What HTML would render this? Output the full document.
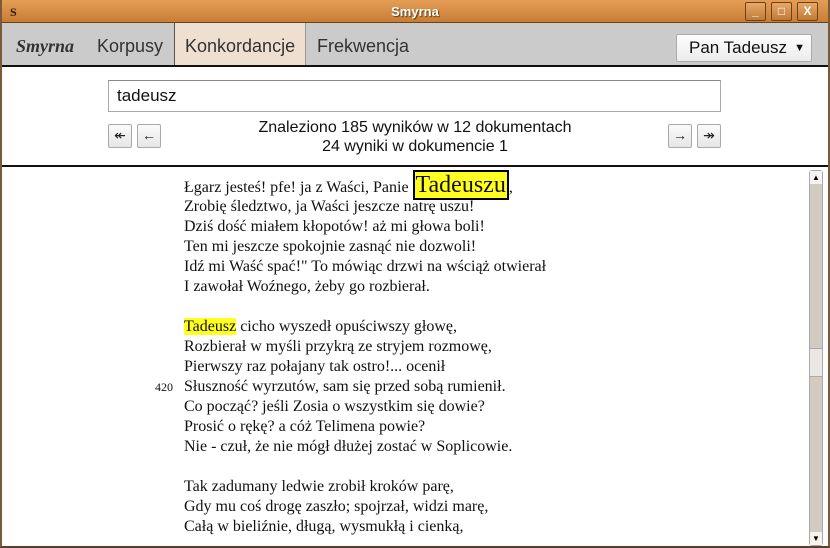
<!DOCTYPE html>
<html><head><meta charset="utf-8"><style>
*{margin:0;padding:0;box-sizing:border-box}
body{width:830px;height:548px;overflow:hidden;background:#fff;font-family:"Liberation Sans",sans-serif;position:relative}
.title{position:absolute;left:0;top:0;width:830px;height:23px;background:linear-gradient(#e59d55,#c87d35);border-bottom:1px solid #6a4418}
.title .t{position:absolute;left:0;width:830px;text-align:center;top:4px;color:#fff;font-weight:bold;font-size:13px;text-shadow:1px 1px 1px #5a3a10}
.title .s{position:absolute;left:10px;top:5px;font-family:"Liberation Serif",serif;font-weight:bold;font-size:12px;color:#2a1a08}
.wb{position:absolute;top:2px;width:21px;height:19px;border:1px solid #6a4418;border-radius:2px;background:linear-gradient(#e8a868,#c07a35);color:#fff;font-size:12px;font-weight:bold;text-align:center;line-height:17px}
.bar{position:absolute;left:2px;top:23px;width:826px;height:44px;background:#cbcbcb;border-bottom:2px solid #111}
.bar span{position:absolute;top:0;height:42px;line-height:46px;font-size:18px;color:#333}
.sel{position:absolute;left:676px;top:34px;width:136px;height:28px;background:linear-gradient(#fdfdfd,#ececec);border:1px solid #aaa;border-radius:2px;font-size:17px;line-height:26px;padding-left:12px;color:#111}
.inp{position:absolute;left:108px;top:80px;width:613px;height:32px;border:1px solid #aaa;border-top-color:#888;font-size:17px;line-height:30px;padding-left:8px;color:#111}
.btn{position:absolute;top:124px;width:24px;height:24px;border:1px solid #aaa;border-radius:2px;background:linear-gradient(#fafafa,#e6e6e6);font-size:14px;text-align:center;line-height:21px;color:#222}
.info{position:absolute;left:200px;top:118px;width:430px;text-align:center;font-size:16px;line-height:19px;color:#111}
.sep{position:absolute;left:0;top:165px;width:830px;height:2px;background:#111}
.txt{position:absolute;left:184px;top:0;font-family:"Liberation Serif",serif;font-size:16px;color:#111;white-space:nowrap}
.l{position:absolute;left:0}
.hl{background:#ffff22}
.big{background:#ffff22;border:2px solid #000;font-size:24px;padding:0 1px;line-height:26px}
.num{position:absolute;left:155px;font-family:"Liberation Serif",serif;font-size:12px;color:#111}
.sb{position:absolute;left:809px;top:170px;width:14px;height:376px;background:#d3cbc2;border:1px solid #aaa;border-radius:3px}
.sb .a{position:absolute;left:0;width:12px;height:13px;background:#f8f3ee;font-size:8px;text-align:center;line-height:13px}
.frame{position:absolute;left:0;top:0;width:830px;height:548px;border-left:2px solid #7a5a38;border-right:2px solid #7a5a38;border-bottom:2px solid #5a4028;pointer-events:none}
</style></head><body>
<div class="title"><div class="s">S</div><div class="t">Smyrna</div>
<div class="wb" style="left:745px">_</div><div class="wb" style="left:771px">□</div><div class="wb" style="left:797px">X</div></div>
<div class="bar">
<span style="left:14px;font-family:'Liberation Serif',serif;font-style:italic;font-weight:bold;font-size:18px">Smyrna</span>
<span style="left:95px">Korpusy</span>
<span style="left:172px;width:132px;background:#efdfd0;border-left:1px solid #555;border-right:1px solid #999;padding-left:10px">Konkordancje</span>
<span style="left:315px">Frekwencja</span>
</div>
<div class="sel">Pan Tadeusz <span style="position:absolute;right:6px;font-size:11px">▼</span></div>
<div class="inp">tadeusz</div>
<div class="btn" style="left:108px">↞</div><div class="btn" style="left:137px">←</div>
<div class="btn" style="left:668px">→</div><div class="btn" style="left:697px">↠</div>
<div class="info">Znaleziono 185 wyników w 12 dokumentach<br>24 wyniki w dokumencie 1</div>
<div class="sep"></div>
<div class="txt">
<div class="l" style="top:172px">Łgarz jesteś! pfe! ja z Waści, Panie <span class="big">Tadeuszu</span>,</div>
<div class="l" style="top:198px">Zrobię śledztwo, ja Waści jeszcze natrę uszu!</div>
<div class="l" style="top:218px">Dziś dość miałem kłopotów! aż mi głowa boli!</div>
<div class="l" style="top:238px">Ten mi jeszcze spokojnie zasnąć nie dozwoli!</div>
<div class="l" style="top:258px">Idź mi Waść spać!" To mówiąc drzwi na wściąż otwierał</div>
<div class="l" style="top:278px">I zawołał Woźnego, żeby go rozbierał.</div>
<div class="l" style="top:318px"><span class="hl">Tadeusz</span> cicho wyszedł opuściwszy głowę,</div>
<div class="l" style="top:338px">Rozbierał w myśli przykrą ze stryjem rozmowę,</div>
<div class="l" style="top:358px">Pierwszy raz połajany tak ostro!... ocenił</div>
<div class="l" style="top:378px">Słuszność wyrzutów, sam się przed sobą rumienił.</div>
<div class="l" style="top:398px">Co począć? jeśli Zosia o wszystkim się dowie?</div>
<div class="l" style="top:418px">Prosić o rękę? a cóż Telimena powie?</div>
<div class="l" style="top:438px">Nie - czuł, że nie mógł dłużej zostać w Soplicowie.</div>
<div class="l" style="top:478px">Tak zadumany ledwie zrobił kroków parę,</div>
<div class="l" style="top:498px">Gdy mu coś drogę zaszło; spojrzał, widzi marę,</div>
<div class="l" style="top:518px">Całą w bieliźnie, długą, wysmukłą i cienką,</div>
</div>
<div class="num" style="top:380px">420</div>
<div class="sb"><div class="a" style="top:0">▲</div>
<div style="position:absolute;left:0;top:177px;width:12px;height:29px;background:#ebe7e3;border-top:1px solid #aaa;border-bottom:1px solid #aaa"></div>
<div class="a" style="bottom:0">▼</div></div>
<div class="frame"></div>
</body></html>
